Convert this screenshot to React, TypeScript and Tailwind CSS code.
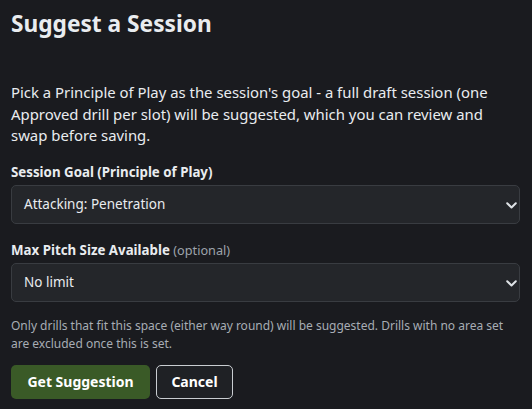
import React from "react";

function Chevron() {
  return (
    <svg width="11" height="7" viewBox="0 0 11 7" className="absolute right-[3px] top-[17px] pointer-events-none">
      <path d="M1.2 1.2l4.3 4.3 4.3-4.3" fill="none" stroke="#dee2e6" strokeWidth="2" strokeLinecap="round" strokeLinejoin="round" />
    </svg>
  );
}

export default function App() {
  return (
    <div className="w-[532px] h-[409px] bg-[#1a1b1f] text-[#e9ecef] px-[11px] pt-[9px] overflow-hidden" style={{ fontFamily: '"Noto Sans", "Open Sans", sans-serif' }}>
      <h1 className="text-[22.7px] font-bold leading-[30px] m-0">Suggest a Session</h1>
      <p className="mt-[43px] text-[14.9px] leading-[21.5px]">
        Pick a Principle of Play as the session's goal - a full draft session (one Approved drill per slot) will be suggested, which you can review and swap before saving.
      </p>
      <div className="mt-[15px]">
        <label className="block text-[13.3px] font-bold leading-[20px] mb-[3px]">Session Goal (Principle of Play)</label>
        <div className="relative w-[509px]">
          <div className="h-[39px] rounded-[5px] border border-[#393c41] bg-[#24262a] flex items-center px-[12px] text-[13.5px]">Attacking: Penetration</div>
          <Chevron />
        </div>
      </div>
      <div className="mt-[16px]">
        <label className="block text-[13.3px] font-bold leading-[20px] mb-[3px]">
          Max Pitch Size Available <span className="font-normal text-[12.7px] text-[#9ea4ab]">(optional)</span>
        </label>
        <div className="relative w-[509px]">
          <div className="h-[39px] rounded-[5px] border border-[#393c41] bg-[#24262a] flex items-center px-[12px] text-[13.5px]">No limit</div>
          <Chevron />
        </div>
      </div>
      <p className="mt-[15px] text-[12px] leading-[18px] text-[#a7adb4]">
        Only drills that fit this space (either way round) will be suggested. Drills with no area set are excluded once this is set.
      </p>
      <div className="mt-[12px] flex gap-[6px]">
        <button className="h-[34px] w-[139px] rounded-[5px] bg-[#3a5a27] text-white text-[14px] font-bold">Get Suggestion</button>
        <button className="h-[34px] w-[77px] rounded-[5px] border border-[#c9cdd1] bg-[#1f2125] text-white text-[14px] font-bold">Cancel</button>
      </div>
    </div>
  );
}
